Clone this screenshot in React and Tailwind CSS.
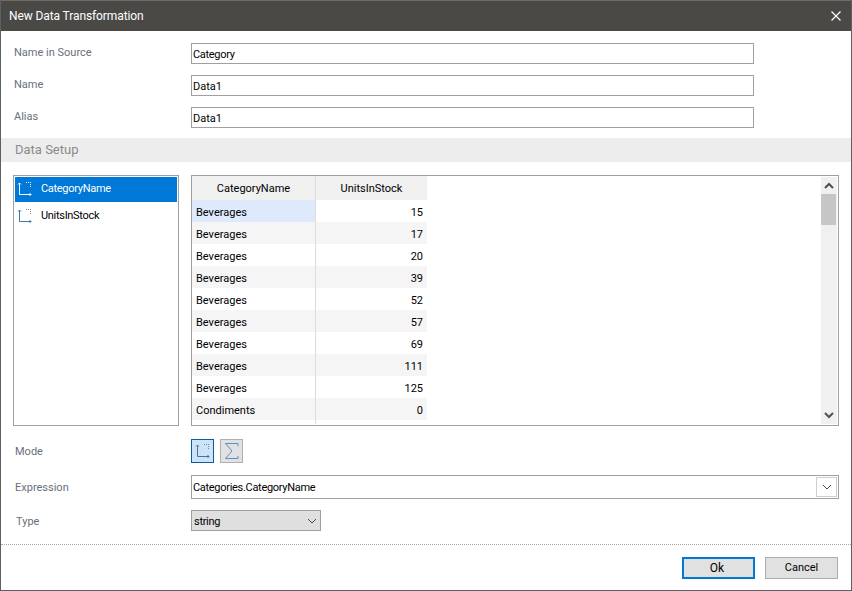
const font = { fontFamily: 'Roboto, sans-serif' };

function FieldIcon({ color = "#3f74ae", dots = "#7a8a9a" }) {
  return (
    <svg width="16" height="16" viewBox="0 0 16 16" fill="none" className="shrink-0">
      <path d="M3.5 2V13.5H15" stroke={color} strokeWidth="1" />
      <path d="M2 3.5L3.5 2L5 3.5" stroke={color} strokeWidth="1" />
      <path d="M13.5 12L15 13.5L13.5 15" stroke={color} strokeWidth="1" />
      <path d="M10 1.5h1M12 1.5h1M14 1.5h1M14 3.5h1M14 5.5h1" stroke={dots} strokeWidth="1" />
    </svg>
  );
}

function Chevron({ up, className = "" }) {
  return (
    <svg width="10" height="7" viewBox="0 0 10 7" fill="none" className={className}>
      <path d={up ? "M1 6L5 2L9 6" : "M1 1L5 5L9 1"} stroke="currentColor" strokeWidth="2" />
    </svg>
  );
}

function ThinChevron() {
  return (
    <svg width="10" height="6" viewBox="0 0 10 6" fill="none">
      <path d="M1 1L5 5L9 1" stroke="#444" strokeWidth="1" />
    </svg>
  );
}

function Field({ label, value, tight }) {
  return (
    <div className="flex h-[21px] items-start">
      <div className="w-[177px] text-[11px] leading-[20px] text-[#6a6f78]">{label}</div>
      <div className={`flex h-[21px] w-[563px] items-center border border-[#a0a0a0] pl-[1px] pt-[4px] text-[11px] text-black ${tight ? "tracking-[-0.3px]" : ""}`}>
        {value}
      </div>
    </div>
  );
}

const rows = [
  ["Beverages", 15], ["Beverages", 17], ["Beverages", 20], ["Beverages", 39], ["Beverages", 52],
  ["Beverages", 57], ["Beverages", 69], ["Beverages", 111], ["Beverages", 125], ["Condiments", 0],
];

export default function App() {
  return (
    <div style={font} className="flex h-[591px] w-[852px] flex-col overflow-hidden border-x border-b border-[#5f5f5f] bg-white text-[11px]">
      <div className="flex h-[31px] shrink-0 items-center justify-between border-t border-[#6b6b6b] bg-[#4b4946] pl-[8px] pr-[10px]">
        <span className="text-[12px] tracking-[-0.1px] text-white">New Data Transformation</span>
        <svg width="10" height="10" viewBox="0 0 10 10" fill="none">
          <path d="M0.5 0.5L9.5 9.5M9.5 0.5L0.5 9.5" stroke="#fff" strokeWidth="1.2" />
        </svg>
      </div>

      <div className="flex flex-col gap-[11px] pl-[13px] pt-[12px]">
        <Field label="Name in Source" value="Category" tight />
        <Field label="Name" value="Data1" />
        <Field label="Alias" value="Data1" />
      </div>

      <div className="mt-[10px] flex h-[24px] shrink-0 items-center bg-[#ededed] pl-[14px] text-[13px] text-[#8a8a8a]">
        Data Setup
      </div>

      <div className="mt-[13px] flex gap-[12px] pl-[12px]">
        <div className="h-[251px] w-[166px] border border-[#a0a0a0] p-[1px] tracking-[-0.3px]">
          <div className="flex h-[25px] items-center gap-[9px] bg-[#0078d7] pb-[1px] pl-[1px] text-white">
            <FieldIcon color="#fff" dots="#fff" />
            <span>CategoryName</span>
          </div>
          <div className="mt-[2px] flex h-[25px] items-center gap-[9px] pb-[1px] pl-[1px] text-black">
            <FieldIcon />
            <span>UnitsInStock</span>
          </div>
        </div>

        <div className="flex h-[251px] w-[648px] border border-[#a0a0a0]">
          <div className="flex-1 overflow-hidden">
            <div className="flex h-[24px] w-[235px] bg-[#f0f0f0] text-black">
              <div className="flex w-[124px] items-center justify-center border-r border-[#dcdcdc] pt-[3px]">CategoryName</div>
              <div className="flex flex-1 items-center justify-center pt-[3px]">UnitsInStock</div>
            </div>
            {rows.map(([name, n], i) => (
              <div key={i} className={`flex h-[22px] w-[235px] ${i % 2 ? "bg-[#f5f5f5]" : "bg-white"}`}>
                <div className={`flex w-[124px] items-center border-r border-[#dcdcdc] pl-[4px] pt-[5px] text-black ${i === 0 ? "bg-[#deeafc]" : ""}`}>
                  {name}
                </div>
                <div className="flex flex-1 items-center justify-end pr-[4px] pt-[5px] text-black">{n}</div>
              </div>
            ))}
            <div className="h-[4px] w-[124px] border-r border-[#dcdcdc]" />
          </div>
          <div className="mb-[1px] mr-[1px] mt-[1px] flex w-[16px] flex-col bg-[#f0f0f0] text-[#505050]">
            <div className="flex h-[17px] items-center justify-center"><Chevron up /></div>
            <div className="h-[31px] w-[15px] bg-[#c6c6c6]" />
            <div className="flex-1" />
            <div className="flex h-[17px] items-center justify-center"><Chevron /></div>
          </div>
        </div>
      </div>

      <div className="mt-[13px] flex items-center pl-[14px]">
        <div className="w-[176px] pt-[2px] text-[#6a6f78]">Mode</div>
        <div className="flex gap-[6px]">
          <div className="flex h-[24px] w-[23px] items-center justify-center border border-[#0f5a9c] bg-[#cde4f7] pr-[2px]">
            <FieldIcon />
          </div>
          <div className="flex h-[24px] w-[23px] items-center justify-center border border-[#b0b0b0] bg-[#e1e1e1]">
            <svg width="15" height="18" viewBox="0 0 15 18" fill="none">
              <path d="M14 4V1.5H1.5L8 9L1.5 16.5H14V14" stroke="#5a8fc7" strokeWidth="1" />
            </svg>
          </div>
        </div>
      </div>

      <div className="mt-[12px] flex items-center pl-[14px]">
        <div className="w-[176px] pt-[2px] text-[#6a6f78]">Expression</div>
        <div className="flex h-[24px] w-[648px] items-center justify-between border border-[#a0a0a0] pl-[1px] pr-[1px] text-black">
          <span className="pt-[2px] tracking-[-0.3px]">Categories.CategoryName</span>
          <div className="flex h-[20px] w-[21px] items-center justify-center border border-[#cfcfcf] bg-white">
            <ThinChevron />
          </div>
        </div>
      </div>

      <div className="mt-[11px] flex items-center pl-[15px]">
        <div className="w-[175px] pt-[4px] text-[#6a6f78]">Type</div>
        <div className="flex h-[21px] w-[130px] items-center justify-between border border-[#a0a0a0] bg-[#dfdfdf] pl-[2px] pr-[3px] text-black">
          <span className="pt-[3px] tracking-[-0.3px]">string</span>
          <ThinChevron />
        </div>
      </div>

      <div className="mt-[13px] border-t border-dotted border-[#a8a8a8]" />

      <div className="mt-[12px] flex justify-end gap-[10px] pr-[13px]">
        <button className="h-[22px] w-[73px] border-2 border-[#0078d7] bg-[#e1e1e1] pr-[3px] text-[12px] text-black">Ok</button>
        <button className="h-[22px] w-[73px] border border-[#adadad] bg-[#e1e1e1] text-[11px] text-black">Cancel</button>
      </div>
    </div>
  );
}
